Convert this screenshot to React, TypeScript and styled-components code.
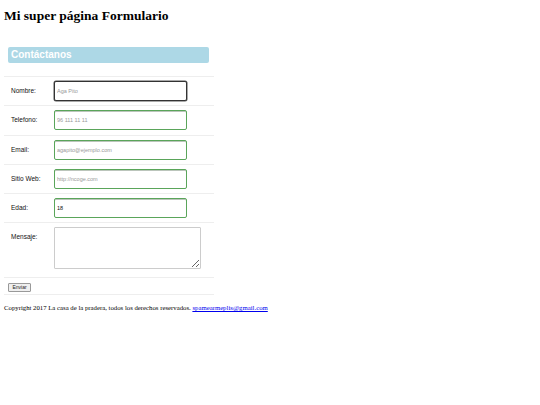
import React from "react";
import styled, { createGlobalStyle } from "styled-components";

const Global = createGlobalStyle`
  html, body { margin: 0; padding: 0; background: #fff; }
  body { font-family: "Liberation Serif", "Times New Roman", serif; }
`;

const Page = styled.div`
  padding: 4px;
  width: 532px;
`;

const Title = styled.h1`
  margin: 4px 0 0;
  font-family: "Liberation Serif", serif;
  font-size: 13.5px;
  font-weight: bold;
  line-height: 16px;
  color: #000;
`;

const Form = styled.form`
  width: 210px;
  margin-top: 23px;
  font-family: "Liberation Sans", Arial, sans-serif;
`;

const Banner = styled.div`
  margin: 0 5px 13px 4px;
  height: 16px;
  line-height: 16px;
  background: #add8e6;
  border-radius: 2px;
  color: #fff;
  font-weight: bold;
  font-size: 10px;
  padding-left: 3px;
`;

const Row = styled.div<{ $padBottom?: number }>`
  display: grid;
  grid-template-columns: 50px 1fr;
  align-items: start;
  border-top: 1px solid #eee;
  padding: 4px 0 ${(p) => p.$padBottom ?? 4.25}px;
`;

const Label = styled.label`
  padding-left: 7px;
  padding-top: 6px;
  font-size: 6.5px;
  line-height: 8px;
  color: #111;
`;

const Input = styled.input<{ $focused?: boolean }>`
  box-sizing: border-box;
  display: block;
  width: 133px;
  height: 20px;
  margin: 0;
  padding: 1px 2px;
  font-family: "Liberation Sans", Arial, sans-serif;
  font-size: 5.5px;
  color: #111;
  border-radius: 2px;
  outline: none;
  border: 1px solid ${(p) => (p.$focused ? "#333" : "#5aa55a")};
  box-shadow: ${(p) =>
    p.$focused ? "0 0 0 0.5px #555" : "inset 0 1px 0 rgba(60,90,60,0.35)"};
  &::placeholder { color: #999; }
`;

const TextArea = styled.textarea`
  box-sizing: border-box;
  width: 147px;
  height: 42px;
  margin: 0;
  padding: 1px 2px;
  border: 1px solid #ccc;
  border-radius: 1px;
  resize: both;
  font-size: 5px;
  display: block;
`;

const ButtonRow = styled.div`
  border-top: 1px solid #eee;
  border-bottom: 1px solid #eee;
  padding: 5px 0 2px 4px;
`;

const Button = styled.button`
  box-sizing: border-box;
  height: 9px;
  width: 23px;
  padding: 0;
  margin: 0;
  font-family: "Liberation Sans", Arial, sans-serif;
  font-size: 5px;
  line-height: 7px;
  color: #222;
  background: #efefef;
  border: 1px solid #999;
  border-radius: 1px;
  display: block;
`;

const Footer = styled.p`
  margin: 9px 0 0;
  font-family: "Liberation Serif", serif;
  font-size: 6.75px;
  color: #000;
  a { color: #00e; }
`;

type Field = { label: string; placeholder?: string; value?: string; focused?: boolean };

const fields: Field[] = [
  { label: "Nombre:", placeholder: "Aga Pito", focused: true },
  { label: "Telefono:", placeholder: "96 111 11 11" },
  { label: "Email:", placeholder: "agapito@ejemplo.com" },
  { label: "Sitio Web:", placeholder: "http://ncoge.com" },
  { label: "Edad:", value: "18" },
];

export default function App() {
  return (
    <Page>
      <Global />
      <Title>Mi super página Formulario</Title>
      <Form onSubmit={(e) => e.preventDefault()}>
        <Banner>Contáctanos</Banner>
        {fields.map((f) => (
          <Row key={f.label}>
            <Label>{f.label}</Label>
            <Input
              $focused={f.focused}
              placeholder={f.placeholder}
              defaultValue={f.value}
            />
          </Row>
        ))}
        <Row $padBottom={8}>
          <Label>Mensaje:</Label>
          <TextArea />
        </Row>
        <ButtonRow>
          <Button type="submit">Enviar</Button>
        </ButtonRow>
      </Form>
      <Footer>
        Copyright 2017 La casa de la pradera, todos los derechos reservados.{" "}
        <a href="#">spamearmeplis@gmail.com</a>
      </Footer>
    </Page>
  );
}
